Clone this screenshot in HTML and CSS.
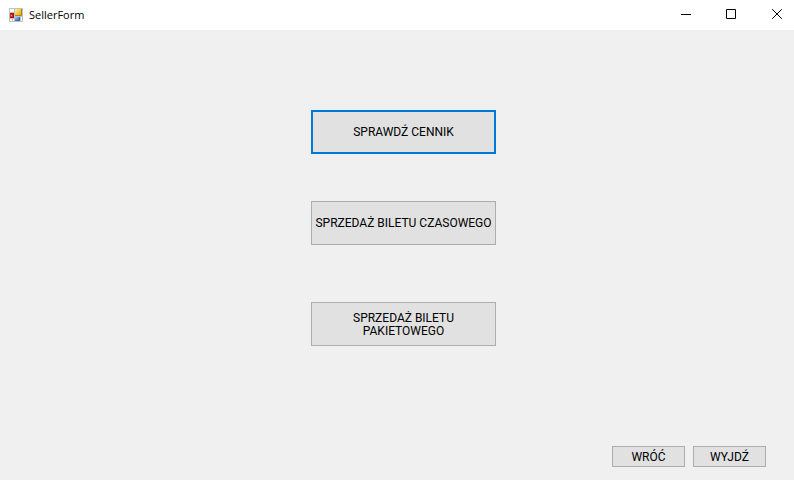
FILE: index.html
```html
<!DOCTYPE html>
<html lang="pl">
<head>
<meta charset="utf-8">
<title>SellerForm</title>
<link rel="stylesheet" href="styles.css">
</head>
<body>
<header class="titlebar">
  <svg class="app-icon" width="14" height="14" viewBox="0 0 14 14" shape-rendering="crispEdges" aria-hidden="true">
    <defs>
      <linearGradient id="gold" x1="0" y1="0" x2="1" y2="1"><stop offset="0" stop-color="#fff0a0"/><stop offset="1" stop-color="#e8a808"/></linearGradient>
      <linearGradient id="blue" x1="0" y1="0" x2="1" y2="1"><stop offset="0" stop-color="#a8ccff"/><stop offset="1" stop-color="#2f6fd8"/></linearGradient>
    </defs>
    <path fill="#c2c2c2" d="M0 0h14v14H0z"/>
    <path fill="#fff" d="M1 1h4v3H1zM1 11h2v2H1zM4 11h1v2H4zM12 9h1v4h-1z"/>
    <path fill="#a01010" d="M1 5h4v5H1z"/>
    <path fill="#d82a20" d="M1 6h3v3H1z"/>
    <path fill="#f8a090" d="M2 7h1v1H2z"/>
    <path fill="#b88410" d="M6 1h7v7H6z"/>
    <path fill="url(#gold)" d="M6 1h6v6H6z"/>
    <path fill="#3a68c0" d="M6 9h5v4H6z"/>
    <path fill="url(#blue)" d="M6 9h4v3H6z"/>
  </svg>
  <h1 class="title">SellerForm</h1>
  <div class="controls">
    <button class="control" type="button" aria-label="Minimalizuj"><svg width="11" height="11" viewBox="0 0 11 11"><path d="M1 5.5h10"/></svg></button>
    <button class="control" type="button" aria-label="Maksymalizuj"><svg width="11" height="11" viewBox="0 0 11 11"><path d="M.5 .5h9v9h-9z"/></svg></button>
    <button class="control" type="button" aria-label="Zamknij"><svg width="11" height="11" viewBox="0 0 11 11"><path d="M.2 .2l9.6 9.6M9.8 .2L.2 9.8"/></svg></button>
  </div>
</header>
<main class="form">
  <div class="actions">
    <button class="button button-large button-default" type="button">SPRAWDŹ CENNIK</button>
    <button class="button button-large" type="button">SPRZEDAŻ BILETU CZASOWEGO</button>
    <button class="button button-large" type="button">SPRZEDAŻ BILETU PAKIETOWEGO</button>
  </div>
  <footer class="footer">
    <button class="button button-small" type="button">WRÓĆ</button>
    <button class="button button-small" type="button">WYJDŹ</button>
  </footer>
</main>
</body>
</html>
```
FILE: styles.css
```css
* {
  box-sizing: border-box;
}

body {
  margin: 0;
  min-height: 100vh;
  display: flex;
  flex-direction: column;
  background: #f0f0f0;
  color: #000;
  font: 12px/13px Roboto, "Liberation Sans", sans-serif;
}

.titlebar {
  display: flex;
  align-items: center;
  height: 30px;
  padding: 0 0 1px 9px;
  background: #fff;
}

.title {
  margin: 0 0 0 6px;
  font: 11px/16px "Open Sans", "Noto Sans", sans-serif;
}

.app-icon {
  display: block;
}

.controls {
  display: flex;
  align-self: stretch;
  margin-left: auto;
  margin-right: -6px;
}

.control {
  display: flex;
  align-items: center;
  justify-content: center;
  width: 46px;
  padding: 0;
  border: 0;
  background: none;
}

.control path {
  fill: none;
  stroke: #000;
}

.form {
  flex: 1;
  display: flex;
  flex-direction: column;
  justify-content: space-between;
  padding: 80px 28px 13px;
}

.actions {
  display: flex;
  flex-direction: column;
  align-items: center;
  gap: 57px;
  padding-left: 13px;
}

.button {
  border: 1px solid #adadad;
  background: #e1e1e1;
  color: inherit;
  font: inherit;
  padding: 1px 0 0;
}

.button-large {
  width: 185px;
  height: 44px;
}

.button-default {
  border: 2px solid #0078d7;
  margin-bottom: -10px;
}

.button-small {
  width: 73px;
  height: 21px;
}

.footer {
  display: flex;
  justify-content: flex-end;
  gap: 8px;
}
```
